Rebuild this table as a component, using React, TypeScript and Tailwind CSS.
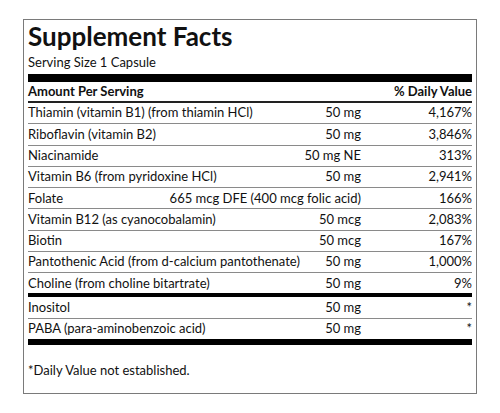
import React from "react"

// rows of the facts panel; "line" is the rule under the row
const rows = [
  { name: "Thiamin (vitamin B1) (from thiamin HCl)", amount: "50 mg", dv: "4,167%", line: "thin" },
  { name: "Riboflavin (vitamin B2)", amount: "50 mg", dv: "3,846%", line: "thin" },
  { name: "Niacinamide", amount: "50 mg NE", dv: "313%", line: "thin" },
  { name: "Vitamin B6 (from pyridoxine HCl)", amount: "50 mg", dv: "2,941%", line: "thin" },
  { name: "Folate", amount: "665 mcg DFE (400 mcg folic acid)", dv: "166%", line: "thin" },
  { name: "Vitamin B12 (as cyanocobalamin)", amount: "50 mcg", dv: "2,083%", line: "thin" },
  { name: "Biotin", amount: "50 mcg", dv: "167%", line: "thin" },
  { name: "Pantothenic Acid (from d-calcium pantothenate)", amount: "50 mg", dv: "1,000%", line: "thin" },
  { name: "Choline (from choline bitartrate)", amount: "50 mg", dv: "9%", line: "mid" },
  { name: "Inositol", amount: "50 mg", dv: "*", line: "thin" },
  { name: "PABA (para-aminobenzoic acid)", amount: "50 mg", dv: "*", line: "thick" },
]

export default function App() {
  return (
    <div className="w-[500px] h-[413px] bg-white pt-[19px] pl-[23px] font-['Lato',sans-serif] text-[#111]">
      <div className="w-[454px] h-[375px] border border-[#7a7a7a] px-[4px] pt-[1px]">
        <h1 className="text-[26px] font-bold leading-[31px]">Supplement Facts</h1>
        <div className="text-[13px] leading-[20px]">Serving Size 1 Capsule</div>
        <div className="h-[8px] bg-black mt-[2px]" />
        <div className="flex items-end h-[21px] text-[13px] font-bold border-b-2 border-[#222]">
          <span className="flex-1">Amount Per Serving</span>
          <span className="w-[110px] text-right">% Daily Value</span>
        </div>
        {rows.map((r) => (
          <div
            key={r.name}
            className={
              "flex items-center text-[13px] " +
              (r.line === "thin"
                ? "h-[21.3px] border-b border-[#8a8a8a]"
                : r.line === "mid"
                ? "h-[24px] border-b-4 border-black"
                : "h-[26px] border-b-[6px] border-black")
            }
          >
            <span className="flex-1 whitespace-nowrap">{r.name}</span>
            <span className="text-right whitespace-nowrap">{r.amount}</span>
            <span className="w-[111px] text-right">{r.dv}</span>
          </div>
        ))}
        <p className="text-[13px] mt-[16px]">*Daily Value not established.</p>
      </div>
    </div>
  )
}
